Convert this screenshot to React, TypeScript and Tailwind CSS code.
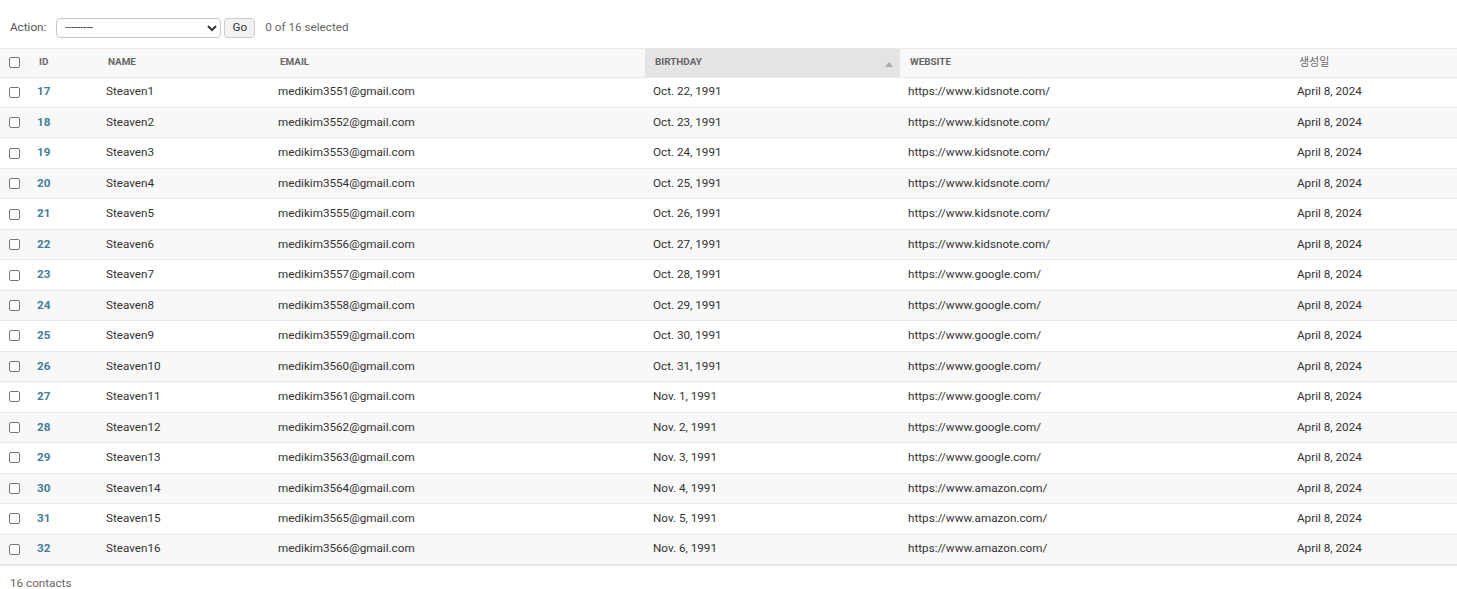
import React from "react";

const rows = [
  [17, "Oct. 22, 1991", "https://www.kidsnote.com/"],
  [18, "Oct. 23, 1991", "https://www.kidsnote.com/"],
  [19, "Oct. 24, 1991", "https://www.kidsnote.com/"],
  [20, "Oct. 25, 1991", "https://www.kidsnote.com/"],
  [21, "Oct. 26, 1991", "https://www.kidsnote.com/"],
  [22, "Oct. 27, 1991", "https://www.kidsnote.com/"],
  [23, "Oct. 28, 1991", "https://www.google.com/"],
  [24, "Oct. 29, 1991", "https://www.google.com/"],
  [25, "Oct. 30, 1991", "https://www.google.com/"],
  [26, "Oct. 31, 1991", "https://www.google.com/"],
  [27, "Nov. 1, 1991", "https://www.google.com/"],
  [28, "Nov. 2, 1991", "https://www.google.com/"],
  [29, "Nov. 3, 1991", "https://www.google.com/"],
  [30, "Nov. 4, 1991", "https://www.amazon.com/"],
  [31, "Nov. 5, 1991", "https://www.amazon.com/"],
  [32, "Nov. 6, 1991", "https://www.amazon.com/"],
] as const;

function Box() {
  return (
    <span className="block w-[11px] h-[11px] border border-[#767676] rounded-[2px] bg-white ml-[9px]" />
  );
}

export default function App() {
  return (
    <div
      className="w-[1457px] h-[589px] bg-white text-[#333] text-[11.7px] overflow-hidden"
      style={{ fontFamily: 'Roboto, "Noto Sans CJK KR", sans-serif' }}
    >
      <div className="h-[48px] flex items-center pl-[10px] pt-[7px]">
        <span className="text-[#555] mr-[10px]">Action:</span>
        <select className="h-[20px] w-[165px] border border-[#c8c8c8] rounded-[4px] bg-white text-[11px] text-[#333] pl-[4px]">
          <option>---------</option>
        </select>
        <button className="ml-[3px] h-[20px] w-[31px] border border-[#ccc] rounded-[4px] bg-[#f2f2f2] text-[11.7px] text-[#333]">
          Go
        </button>
        <span className="ml-[10px] text-[#666]">0 of 16 selected</span>
      </div>
      <table className="table-fixed border-collapse w-[1457px]">
        <colgroup>
          <col className="w-[29px]" />
          <col className="w-[69px]" />
          <col className="w-[172px]" />
          <col className="w-[375px]" />
          <col className="w-[255px]" />
          <col className="w-[389px]" />
          <col className="w-[168px]" />
        </colgroup>
        <thead>
          <tr className="h-[28.5px] bg-[#f8f8f8] border-y border-[#e8e8e8] text-[9.9px] text-[#666] font-bold uppercase text-left">
            <th className="p-0"><Box /></th>
            <th className="p-0 pl-[10px]">ID</th>
            <th className="p-0 pl-[10px]">Name</th>
            <th className="p-0 pl-[10px]">Email</th>
            <th className="p-0 pl-[10px] bg-[#e4e4e4] relative">
              Birthday
              <span className="absolute right-[7px] top-[13px] w-0 h-0 border-l-[4px] border-r-[4px] border-b-[5px] border-l-transparent border-r-transparent border-b-[#aaa]" />
            </th>
            <th className="p-0 pl-[10px]">Website</th>
            <th className="p-0 pl-[10px] font-normal normal-case text-[11px]">생성일</th>
          </tr>
        </thead>
        <tbody>
          {rows.map(([id, bd, web], i) => (
            <tr
              key={id}
              className={`h-[30.47px] border-b border-[#e8e8e8] ${i % 2 === 1 ? "bg-[#f8f8f8]" : "bg-white"}`}
            >
              <td className="p-0"><Box /></td>
              <td className="p-0 pl-[8px] font-bold text-[#447e9b]">{id}</td>
              <td className="p-0 pl-[8px]">Steaven{i + 1}</td>
              <td className="p-0 pl-[8px]">medikim{3551 + i}@gmail.com</td>
              <td className="p-0 pl-[8px]">{bd}</td>
              <td className="p-0 pl-[8px]">{web}</td>
              <td className="p-0 pl-[8px]">April 8, 2024</td>
            </tr>
          ))}
        </tbody>
      </table>
      <div className="border-t border-[#e8e8e8] pl-[10px] pt-[9px] text-[#666]">16 contacts</div>
    </div>
  );
}
